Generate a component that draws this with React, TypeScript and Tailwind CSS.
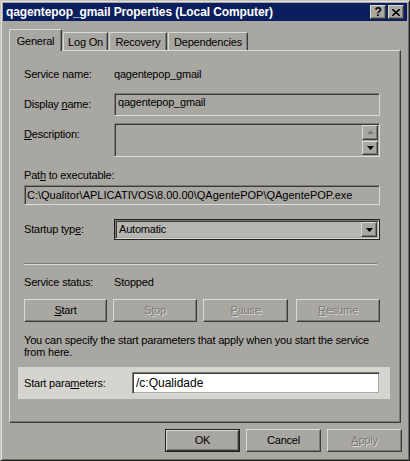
import React from "react";

// classic win2k-ish colour set, taken from the screenshot (it is a bit darker than real #d4d0c8)

const U = ({ children }: { children: React.ReactNode }) => (
  <span className="underline underline-offset-[1px]">{children}</span>
);

const Btn = ({
  children,
  w,
  disabled,
  isDefault,
}: {
  children: React.ReactNode;
  w: string;
  disabled?: boolean;
  isDefault?: boolean;
}) => (
  <div className={`${w} h-[23px] ${isDefault ? "border border-[#202020]" : ""}`}>
    <div
      className={`w-full h-full flex items-center justify-center border border-t-[#dcdad4] border-l-[#dcdad4] border-r-[#3a3a3a] border-b-[#3a3a3a] shadow-[inset_-1px_-1px_0_#7c7a76] ${
        disabled ? "text-[#7c7a76] [text-shadow:1px_1px_0_#d8d6d0]" : "text-black"
      }`}
    >
      <span>{children}</span>
    </div>
  </div>
);

const Sunken = ({ className, children }: { className: string; children?: React.ReactNode }) => (
  <div
    className={`border border-t-[#7c7a76] border-l-[#7c7a76] border-r-[#dcdad4] border-b-[#dcdad4] shadow-[inset_1px_1px_0_#3a3a3a,inset_-1px_-1px_0_#a9a7a1] ${className}`}
  >
    {children}
  </div>
);

const Arrow = ({ up }: { up?: boolean }) => (
  <svg width="7" height="4" viewBox="0 0 7 4">
    <path d={up ? "M3.5 0 L7 4 L0 4 Z" : "M0 0 L7 0 L3.5 4 Z"} fill={up ? "#7c7a76" : "#000"} />
  </svg>
);

const SmallBtn = ({ children, className = "" }: { children: React.ReactNode; className?: string }) => (
  <div
    className={`flex items-center justify-center border border-t-[#dcdad4] border-l-[#dcdad4] border-r-[#3a3a3a] border-b-[#3a3a3a] shadow-[inset_-1px_-1px_0_#7c7a76] bg-[#a9a7a1] ${className}`}
  >
    {children}
  </div>
);

const tabs = [
  { label: "General", w: "w-[53px]", active: true },
  { label: "Log On", w: "w-[45px]" },
  { label: "Recovery", w: "w-[58px]" },
  { label: "Dependencies", w: "w-[80px]" },
];

export default function App() {
  return (
    <div className="w-[410px] h-[461px] bg-[#a9a7a1] font-['Liberation_Sans',Arial,sans-serif] text-[11px] tracking-[-0.2px] text-black leading-none border border-t-[#c6c4be] border-l-[#c6c4be] border-r-[#1e1e1e] border-b-[#1e1e1e] shadow-[inset_1px_1px_0_#e2e0da,inset_-1px_-1px_0_#6e6c68] p-[2px] select-none overflow-hidden">
      {/* title bar */}
      <div className="h-[18px] bg-[#0b1f5e] flex items-center justify-between pl-[3px] pr-[3px]">
        <span className="text-white font-bold text-[12px] tracking-[-0.1px]">
          qagentepop_gmail Properties (Local Computer)
        </span>
        <div className="flex gap-[2px]">
          <SmallBtn className="w-[16px] h-[14px] font-bold text-[12px]">?</SmallBtn>
          <SmallBtn className="w-[16px] h-[14px]">
            <svg width="8" height="7" viewBox="0 0 8 7">
              <path d="M0 0 L8 7 M8 0 L0 7" stroke="#000" strokeWidth="1.6" />
            </svg>
          </SmallBtn>
        </div>
      </div>

      {/* tabs */}
      <div className="ml-[6px] mt-[8px] h-[21px] flex items-end gap-[1px] relative z-10">
        {tabs.map((t) =>
          t.active ? (
            <div
              key={t.label}
              className={`${t.w} h-[22px] -mb-[1px] bg-[#a9a7a1] border-t border-l border-r border-t-[#dcdad4] border-l-[#dcdad4] border-r-[#3a3a3a] rounded-t-[2px] shadow-[inset_-1px_0_0_#7c7a76] flex items-start justify-center pt-[6px]`}
            >
              {t.label}
            </div>
          ) : (
            <div
              key={t.label}
              className={`${t.w} h-[18px] border-t border-l border-r border-t-[#dcdad4] border-l-[#dcdad4] border-r-[#3a3a3a] rounded-t-[2px] shadow-[inset_-1px_0_0_#7c7a76] flex items-center justify-center pt-[1px]`}
            >
              {t.label}
            </div>
          )
        )}
      </div>

      {/* tab page */}
      <div className="ml-[6px] w-[392px] h-[373px] border border-t-[#dcdad4] border-l-[#dcdad4] border-r-[#3a3a3a] border-b-[#3a3a3a] shadow-[inset_-1px_-1px_0_#7c7a76] pl-[14px] pr-[20px] flex flex-col">
        <div className="mt-[15px] h-[16px] flex items-center">
          <span className="w-[90px]">Service name:</span>
          <span>qagentepop_gmail</span>
        </div>

        <div className="mt-[11px] h-[23px] flex items-center">
          <span className="w-[90px]">
            Display <U>n</U>ame:
          </span>
          <Sunken className="flex-1 h-full pl-[3px] pt-[3px]">qagentepop_gmail</Sunken>
        </div>

        <div className="mt-[7px] h-[34px] flex items-start">
          <span className="w-[90px] pt-[6px]">
            <U>D</U>escription:
          </span>
          <Sunken className="flex-1 h-full flex justify-end p-[1px]">
            <div className="w-[16px] flex flex-col">
              <SmallBtn className="h-[15px]">
                <Arrow up />
              </SmallBtn>
              <SmallBtn className="h-[15px] mt-[1px]">
                <Arrow />
              </SmallBtn>
            </div>
          </Sunken>
        </div>

        <div className="mt-[11px] h-[14px] flex items-center">
          <span>
            Pat<U>h</U> to executable:
          </span>
        </div>
        <Sunken className="mt-[3px] h-[20px] flex items-center pl-[2px] tracking-[0px]">
          C:\Qualitor\APLICATIVOS\8.00.00\QAgentePOP\QAgentePOP.exe
        </Sunken>

        <div className="mt-[14px] h-[21px] flex items-center">
          <span className="w-[90px]">
            Startup typ<U>e</U>:
          </span>
          <div className="flex-1 h-full border border-[#202020]">
            <Sunken className="h-full bg-[#b8b6b1] flex items-center pl-[3px] pr-[1px]">
              <span className="flex-1">Automatic</span>
              <SmallBtn className="w-[16px] h-[15px]">
                <Arrow />
              </SmallBtn>
            </Sunken>
          </div>
        </div>

        <div className="mt-[23px] h-[2px] mr-[3px] border-t border-t-[#7c7a76] border-b border-b-[#dcdad4]" />

        <div className="mt-[9px] h-[16px] flex items-center">
          <span className="w-[90px]">Service status:</span>
          <span>Stopped</span>
        </div>

        <div className="mt-[9px] flex">
          <Btn w="w-[84px]">
            <U>S</U>tart
          </Btn>
          <div className="ml-[6px]">
            <Btn w="w-[84px]" disabled>
              S<U>t</U>op
            </Btn>
          </div>
          <div className="ml-[6px]">
            <Btn w="w-[85px]" disabled>
              <U>P</U>ause
            </Btn>
          </div>
          <div className="ml-[8px]">
            <Btn w="w-[84px]" disabled>
              <U>R</U>esume
            </Btn>
          </div>
        </div>

        <p className="mt-[12px] leading-[12px]">
          You can specify the start parameters that apply when you start the service from here.
        </p>

        <div className="mt-[9px] -ml-[6px] -mr-[10px] h-[32px] bg-[#d6d4cf] flex items-center pl-[6px] pr-[10px]">
          <span className="w-[108px]">
            Start para<U>m</U>eters:
          </span>
          <Sunken className="flex-1 h-[22px] bg-white flex items-center pl-[3px] text-[12px] tracking-[0px]">
            /c:Qualidade
          </Sunken>
        </div>
      </div>

      {/* dialog buttons */}
      <div className="mt-[6px] flex justify-end pr-[5px] gap-[6px]">
        <Btn w="w-[75px]" isDefault>
          OK
        </Btn>
        <Btn w="w-[75px]">Cancel</Btn>
        <Btn w="w-[75px]" disabled>
          <U>A</U>pply
        </Btn>
      </div>
    </div>
  );
}
